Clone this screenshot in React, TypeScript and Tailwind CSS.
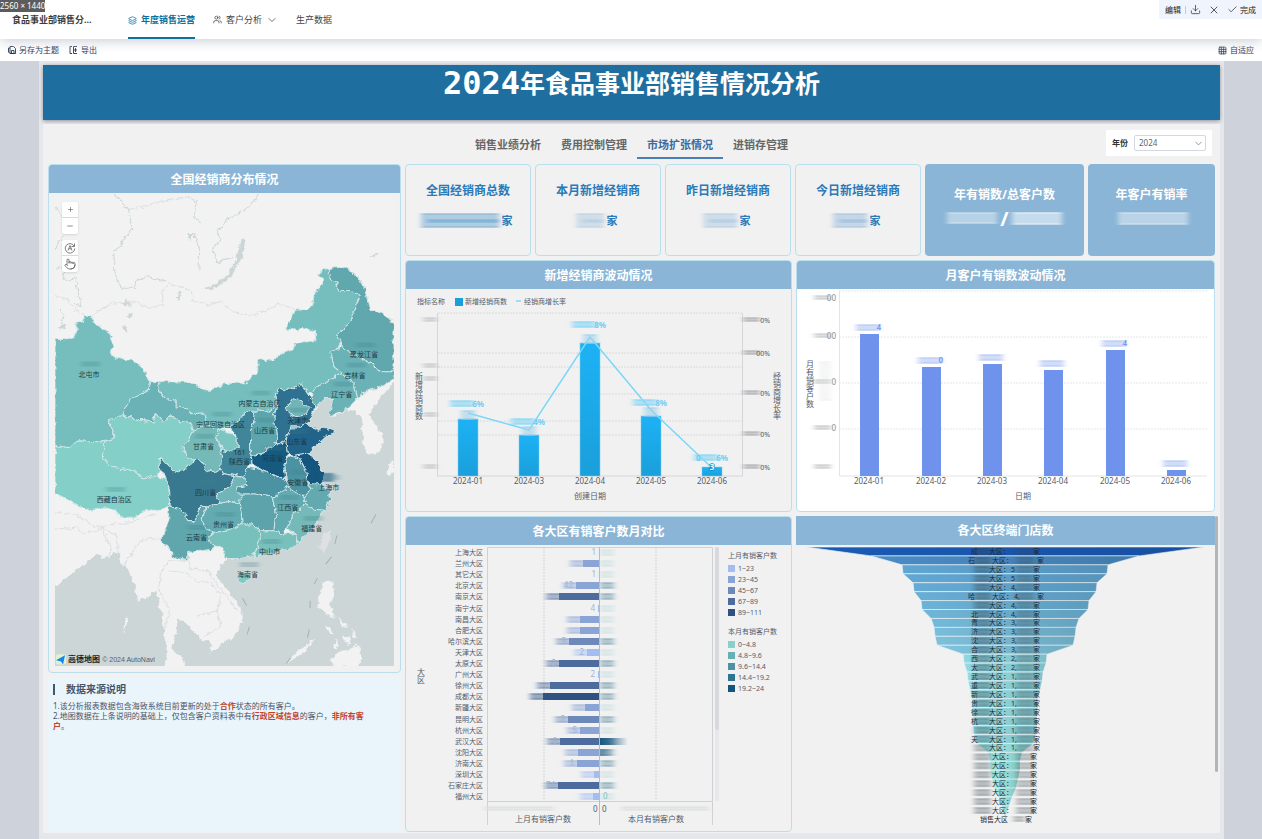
import type { ReactNode } from "react";
import {
  Check,
  ChevronDown,
  Download,
  Grid3x3,
  Layers,
  Minus,
  Plus,
  Pointer,
  Users,
  X,
} from "lucide-react";

const TABS = ["销售业绩分析", "费用控制管理", "市场扩张情况", "进销存管理"];

const KPIS = [
  { title: "全国经销商总数", width: 78, tone: "#5f9fce" },
  { title: "本月新增经销商", width: 28, tone: "#a9c8e0" },
  { title: "昨日新增经销商", width: 34, tone: "#a3c5e0" },
  { title: "今日新增经销商", width: 34, tone: "#8fb6d9" },
];

// Province outlines on the map grid, three units to the pixel.
const PROVINCES: { fill: string; points: string }[] = [
  { fill: "#76bebd", points: "45,535 75,535 95,540 108,520 108,490 130,485 135,468 150,470 160,490 190,505 210,520 218,545 213,585 240,595 275,600 310,625 320,650 332,663 325,690 300,705 270,715 255,745 250,765 205,780 222,830 215,840 175,845 115,838 90,862 45,855" },
  { fill: "#76bebd", points: "332,663 440,665 470,680 510,693 550,670 610,668 655,630 650,600 670,597 700,600 725,580 755,570 760,550 790,545 830,545 820,515 785,505 770,512 738,505 760,450 800,450 815,440 820,405 845,370 845,355 830,345 850,328 870,325 862,345 885,365 895,395 935,395 958,405 940,450 925,490 885,525 900,545 885,570 870,575 880,620 905,640 870,655 850,670 825,680 815,700 800,700 780,670 765,680 740,690 715,685 705,700 710,730 680,755 645,752 620,755 600,775 565,800 535,805 490,795 495,775 490,758 450,760 440,745 410,740 410,720 375,715 355,690 355,665" },
  { fill: "#6bb2b6", points: "332,663 355,665 355,690 375,715 410,720 410,740 440,745 450,760 490,758 495,775 490,795 460,810 440,780 420,785 390,765 370,785 345,760 340,785 300,780 250,765 255,745 270,715 300,705 325,690" },
  { fill: "#60a7ae", points: "870,325 910,322 945,345 965,370 975,400 990,450 1020,460 1059,490 1059,635 1020,635 990,610 950,590 915,570 905,555 885,525 925,490 940,450 958,405 935,395 895,395 885,365 862,345" },
  { fill: "#6bb2b6", points: "885,570 905,555 915,570 950,590 990,610 1020,635 1059,635 1059,655 1030,675 975,695 950,712 940,670 905,640 880,620 870,575" },
  { fill: "#6bb2b6", points: "905,640 940,670 950,712 920,745 865,770 875,715 850,715 820,745 805,720 815,700 825,680 850,670 870,655" },
  { fill: "#84cfc8", points: "45,855 90,862 115,838 175,845 190,845 190,890 215,920 280,930 310,955 350,945 380,960 388,1000 385,1035 355,1050 320,1045 290,1070 240,1070 220,1045 180,1040 150,1050 110,1035 70,1010 45,1000" },
  { fill: "#84cfc8", points: "205,780 250,765 300,780 340,785 345,760 370,785 390,765 420,785 440,780 460,810 430,860 445,895 465,895 430,930 405,935 370,900 357,895 360,930 350,945 310,955 280,930 215,920 190,890 190,845 215,840 222,830" },
  { fill: "#74bab8", points: "460,810 490,795 535,805 525,835 545,865 545,900 540,930 500,935 490,910 465,895 445,895 430,860" },
  { fill: "#7cc6c2", points: "535,805 560,815 590,830 590,860 570,875 545,865 525,835" },
  { fill: "#3f8599", points: "565,800 600,775 620,755 645,752 640,780 630,810 630,880 635,905 620,920 610,950 580,945 550,940 540,930 545,865 570,875 590,860 590,830" },
  { fill: "#5da5ac", points: "645,752 680,755 710,730 700,770 710,820 705,850 660,880 630,885 630,810 640,780" },
  { fill: "#2f7190", points: "705,700 715,685 740,690 765,680 780,670 800,700 810,715 825,735 810,770 800,790 780,800 750,800 735,840 720,850 705,850 710,820 700,770 710,730" },
  { fill: "#6fb5b8", points: "735,745 755,715 775,720 805,745 790,765 760,770 740,758" },
  { fill: "#22648a", points: "735,840 750,800 780,800 800,790 830,810 850,800 883,815 855,830 820,860 800,878 765,885 740,880" },
  { fill: "#175a80", points: "630,885 660,880 705,850 720,850 735,840 740,880 740,900 730,920 735,955 700,945 650,925 635,905" },
  { fill: "#14567e", points: "755,885 800,878 830,900 845,930 850,960 835,985 800,965 795,930 780,900" },
  { fill: "#4c92a2", points: "740,895 760,885 780,900 795,930 800,965 815,985 790,1010 740,980 735,940 730,920" },
  { fill: "#377990", points: "357,895 370,900 405,935 430,930 465,895 490,910 500,935 540,930 550,940 580,945 580,960 560,985 530,995 535,1025 500,1040 480,1035 465,1080 445,1080 420,1045 390,1035 388,990 375,950 357,920" },
  { fill: "#6fb5b8", points: "580,945 620,955 620,975 590,980 605,1000 600,1030 570,1020 535,1025 530,995 560,985 580,960" },
  { fill: "#4c92a2", points: "620,920 650,925 700,945 735,955 745,980 720,1000 695,1010 640,1000 595,1000 590,980 620,975 610,950" },
  { fill: "#5fa6ad", points: "385,1035 420,1045 445,1080 465,1080 480,1035 500,1040 485,1075 495,1105 520,1110 505,1130 530,1160 490,1170 445,1175 445,1200 400,1190 390,1165 360,1140 375,1110 385,1080" },
  { fill: "#64abb0", points: "500,1040 535,1025 570,1020 600,1030 605,1090 570,1110 520,1115 495,1105 485,1075" },
  { fill: "#5ca3ab", points: "605,1000 640,1000 695,1010 705,1060 700,1110 655,1110 640,1090 605,1090 600,1030" },
  { fill: "#62aab0", points: "695,1010 740,980 790,1010 795,1030 760,1060 738,1100 730,1120 700,1110 705,1060" },
  { fill: "#62aab0", points: "800,970 835,970 865,990 870,1020 850,1050 820,1045 795,1030 790,1010 815,985" },
  { fill: "#74bab8", points: "795,1030 820,1045 850,1050 815,1105 770,1145 765,1120 738,1100 760,1060" },
  { fill: "#78c0bc", points: "505,1130 520,1115 570,1110 605,1090 640,1090 655,1110 660,1130 650,1160 635,1185 600,1190 555,1190 545,1160 510,1150" },
  { fill: "#78c0bc", points: "655,1110 700,1110 730,1120 765,1120 770,1155 740,1165 700,1175 640,1190 650,1160 660,1130" },
  { fill: "#7fcbc4", points: "592,1250 610,1238 632,1240 625,1258 605,1268 592,1262" },
];

const PLACES: [string, number, number][] = [
  ["北屯市", 34, 182],
  ["西藏自治区", 59, 307],
  ["宁夏回族自治区", 165, 232],
  ["内蒙古自治区", 204, 211],
  ["黑龙江省", 308, 163],
  ["吉林省", 299, 183],
  ["辽宁省", 286, 202],
  ["天津市", 242, 228],
  ["山西省", 209, 238],
  ["山东省", 241, 249],
  ["甘肃省", 148, 254],
  ["陕西省", 184, 269],
  ["河南省", 217, 266],
  ["四川省", 150, 300],
  ["安徽省", 242, 290],
  ["上海市", 273, 295],
  ["江西省", 232, 315],
  ["贵州省", 168, 332],
  ["云南省", 141, 345],
  ["福建省", 256, 336],
  ["中山市", 214, 359],
  ["海南省", 192, 382],
];

const DEALER_BARS = [
  { month: "2024-01", x: 62, top: 130, line: 124, label: "6%", end: 78, base: 118 },
  { month: "2024-03", x: 123, top: 146, line: 141, label: "4%", end: 139, base: 136 },
  { month: "2024-04", x: 184, top: 54, line: 48, label: "8%", end: 200, base: 39 },
  { month: "2024-05", x: 245, top: 127, line: 121, label: "8%", end: 261, base: 117 },
  { month: "2024-06", x: 306, top: 178, line: 179, label: "6%", end: 322, base: 172 },
];

const MONTH_BARS = [
  { month: "2024-01", x: 72, top: 45, label: "4" },
  { month: "2024-02", x: 134, top: 78, label: "0" },
  { month: "2024-03", x: 195, top: 75, label: "" },
  { month: "2024-04", x: 256, top: 81, label: "" },
  { month: "2024-05", x: 318, top: 61, label: "4" },
  { month: "2024-06", x: 379, top: 181, label: "" },
];

const LAST_MONTH = [
  { color: "#a3bdf0", label: "1~23" },
  { color: "#8aa4d6", label: "23~45" },
  { color: "#6c89b9", label: "45~67" },
  { color: "#4d6c9d", label: "67~89" },
  { color: "#2f5282", label: "89~111" },
];

const THIS_MONTH = [
  { color: "#86d1ca", label: "0~4.8" },
  { color: "#69b0b4", label: "4.8~9.6" },
  { color: "#4c92a2", label: "9.6~14.4" },
  { color: "#2f7490", label: "14.4~19.2" },
  { color: "#12557c", label: "19.2~24" },
];

// name, bar length, colour bucket, readable part of the value
const REGIONS: [string, number, number, string][] = [
  ["上海大区", 0, 0, "1"],
  ["兰州大区", 16, 1, ""],
  ["其它大区", 0, 0, "1"],
  ["北京大区", 23, 1, "42"],
  ["南京大区", 40, 3, ""],
  ["南宁大区", 1, 0, "4"],
  ["南昌大区", 19, 1, ""],
  ["合肥大区", 19, 1, ""],
  ["哈尔滨大区", 30, 2, "5"],
  ["天津大区", 12, 0, "2"],
  ["太原大区", 40, 3, "2"],
  ["广州大区", 1, 0, "2"],
  ["徐州大区", 49, 3, ""],
  ["成都大区", 56, 4, ""],
  ["新疆大区", 14, 1, ""],
  ["昆明大区", 31, 2, "2"],
  ["杭州大区", 19, 1, "5"],
  ["武汉大区", 39, 3, "0"],
  ["沈阳大区", 21, 1, ""],
  ["济南大区", 22, 1, "1"],
  ["深圳大区", 5, 0, ""],
  ["石家庄大区", 41, 3, "74"],
  ["福州大区", 6, 0, ""],
];

const FUNNEL_EDGES = [
  199, 134, 103, 102, 92, 91, 84, 83, 74, 71, 70, 68, 42, 41, 38, 37, 35, 33,
  33, 32, 32, 31, 28, 17, 15, 15, 13, 11, 7, 4, 1, 0,
];

const FUNNEL_FILLS = [
  "#1b5ab5", "#4a8cc5", "#60a5d2", "#62a8d4", "#66abd5", "#69aed6", "#6cb2d7",
  "#70b5d8", "#74b9da", "#78bddb", "#7cc0dc", "#80c4dd", "#8dd8e2", "#8fdae3",
];

const FUNNEL_ROWS: [string, string][] = [
  ["成", ""], ["石", ""], ["", "5"], ["", "5"], ["", "4,"], ["哈", "4,"],
  ["", "4,"], ["北", "4,"], ["青", "3,"], ["济", "3,"], ["沈", "3,"],
  ["合", "3,"], ["西", "2,"], ["太", "2,"], ["武", "1,"], ["重", "1,"],
  ["新", "1,"], ["贵", "1,"], ["徐", "1,"], ["杭", "1,"], ["", "1,"],
  ["天", "1,"], ["", "1,"], ["", ""], ["", ""], ["", ""], ["", ""],
  ["", ""], ["", ""], ["", ""],
];

function Smear({
  x,
  y,
  w,
  h = 6,
  color,
  opacity = 1,
}: {
  x: number;
  y: number;
  w: number;
  h?: number;
  color: string;
  opacity?: number;
}) {
  return (
    <g filter="url(#smear)" opacity={opacity}>
      <rect x={x} y={y} width={w} height={h} fill={color} opacity={0.75} />
      <rect x={x + 1} y={y + 1} width={w - 2} height={1} fill={color} />
      <rect x={x + 2} y={y + h - 2} width={w - 3} height={1} fill={color} />
    </g>
  );
}

function Card({
  title,
  white,
  children,
}: {
  title: string;
  white?: boolean;
  children: ReactNode;
}) {
  return (
    <section
      className={`min-w-0 overflow-hidden rounded border border-[#b9dfee] ${white ? "bg-white" : "bg-[#f1f1f1]"}`}
    >
      <h2 className="h-7 bg-[#8ab5d6] text-center text-[12px] leading-[30px] font-bold text-white">
        {title}
      </h2>
      {children}
    </section>
  );
}

function ChinaMap() {
  return (
    <div className="relative px-[6px] pt-px pb-[6px]">
      <svg viewBox="0 0 338 471" className="block w-full" role="img" aria-label="全国经销商分布地图">
        <g transform="scale(.33333) translate(-45 -103)">
          <rect x="45" y="103" width="1014" height="1413" fill="#f2f2f2" />
          <g filter="url(#coast)">
            <g fill="#cdd6d7">
              <path d="M20 1300L100 1235 170 1180 190 1190 235 1175 240 1205 265 1230 285 1280 290 1320 320 1310 345 1290 360 1340 370 1400 380 1470 370 1540H20Z" />
              <path d="M1080 640L1030 675 975 695 920 745 880 770 865 770 880 745 875 715 850 715 805 775 790 830 780 900 790 960 800 1020 770 1100 700 1160 600 1190 560 1195 530 1230 530 1250 565 1290 600 1340 605 1380 585 1425 550 1445 512 1475 510 1445 480 1435 455 1405 430 1380 410 1375 405 1420 395 1465 430 1490 440 1540H1080Z" />
              <path d="M488 385L520 376 560 345 585 305 603 240 615 240 605 292 575 345 530 382 500 390Z" />
              <path d="M415 395L422 392 418 420 412 422ZM985 290L1015 278 1005 296ZM245 428L262 420 272 432 255 440ZM245 500L255 495 262 515 250 512ZM255 465L275 462 268 480ZM440 225L462 220 450 240ZM55 500L78 510 72 490Z" />
            </g>
            <g fill="#f2f2f2">
              <path d="M1059 655L1000 690 975 695 920 745 945 755 965 775 960 800 970 830 965 850 985 885 1020 872 1028 835 1010 800 985 765 1000 735 1059 665Z" />
              <path d="M1059 900L1040 915 1045 945 1059 935Z" />
              <path d="M845 1265L875 1262 880 1300 865 1330 885 1365 870 1370 850 1350 830 1340 835 1300Z" />
              <path d="M850 1395L870 1400 880 1420 865 1415ZM890 1370L915 1390 925 1400 905 1400ZM905 1420L925 1430 930 1450 910 1445ZM885 1430L895 1460 880 1465ZM935 1400L948 1430 935 1425ZM870 1495L900 1470 930 1465 950 1450 962 1480 955 1516 880 1516Z" />
              <path d="M815 1440L825 1438 780 1480 735 1510 760 1480ZM258 1370L264 1372 252 1420 250 1400Z" />
            </g>
            <path d="M850 1115L870 1110 870 1130 850 1180 836 1165 838 1140Z" fill="#dfe0e1" />
            <g stroke="#cfe4e6" strokeWidth="3" strokeLinejoin="round">
              {PROVINCES.map((p) => (
                <polygon key={p.points} points={p.points} fill={p.fill} />
              ))}
            </g>
            <g fill="none" stroke="#cdd6d7" strokeWidth="3">
              <path d="M225 105L245 130 265 150 275 210 250 235 245 260 220 270 225 350 245 385 285 385 290 360 320 350 380 365" />
              <path d="M655 105L620 145 560 180 530 215 540 240 515 270 530 305 580 290" />
              <path d="M45 140L65 170M70 225L45 270M45 325H70V358L105 355 115 400 125 440 105 430M55 450L75 465 60 490" />
              <path d="M415 115L450 112 468 130 460 170 480 190M462 225L478 270 475 330" />
            </g>
            <g fill="none" stroke="#dcdfe0" strokeWidth="3">
              <path d="M150 468L215 430 280 425 330 445 370 435 365 395 385 370 450 390 460 420 500 435 540 425 580 455 640 467 680 450 715 432 760 445" />
              <path d="M45 410L80 415 105 450 135 468" />
              <path d="M265 150L330 135 380 120 415 115" />
              <path d="M45 1055L110 1065 170 1100 240 1090 300 1075 350 1060M45 1105L110 1100 130 1120 190 1100 230 1130 235 1175" />
              <path d="M190 1090L195 1130 215 1160 205 1185M360 1140L330 1130 290 1150 250 1215" />
              <path d="M440 1200L385 1200 360 1240 355 1290 390 1350 375 1400" />
              <path d="M445 1200L450 1225 500 1230 520 1260 560 1310 590 1350M470 1365L530 1350 540 1400 490 1425M385 1230L430 1235 470 1260 510 1265 540 1300 530 1360" />
            </g>
          </g>
          <g stroke="#a7b0b2" strokeWidth="3">
            <path d="M888 1125L882 1150M872 1188L855 1210M830 1252L820 1270M808 1320V1342M606 1312L618 1334M626 1398L620 1420M806 1405L800 1430M750 1490L736 1508M1005 1062L990 1088" />
          </g>
        </g>
        {PLACES.map(([name, x, y]) => (
          <g key={name}>
            <Smear x={x - 8} y={y - 15} w={19} h={5} color="#3d7f8a" opacity={0.3} />
            <text x={x} y={y} textAnchor="middle" className="fill-[#1d3a44] text-[7px]">
              {name}
            </text>
          </g>
        ))}
        <Smear x={262} y={278} w={16} h={9} color="#14567e" opacity={0.6} />
        <text x="184" y="260" textAnchor="middle" className="fill-[#1d3a44] text-[7px]">
          161
        </text>
        <rect x="1" y="459" width="10" height="10" rx="2" fill="#dff3cf" />
        <path d="M1 465L10 460 8 469 6 466Z" fill="#1684f0" />
        <text x="13" y="467" className="fill-[#222] text-[8px] font-bold">
          高德地图
        </text>
        <text x="47" y="467" className="fill-[#555f6b] font-['Liberation_Sans'] text-[7px]">
          © 2024 AutoNavi
        </text>
      </svg>
      <div className="absolute top-[9px] left-[13px] flex flex-col text-[#555]">
        <button type="button" aria-label="放大" className="grid size-4 place-items-center rounded-t-xs border-b border-[#ddd] bg-white shadow">
          <Plus size={7} />
        </button>
        <button type="button" aria-label="缩小" className="mb-[6px] grid size-4 place-items-center rounded-b-xs bg-white shadow">
          <Minus size={8} />
        </button>
        <button type="button" aria-label="自动定位" className="grid size-4 place-items-center rounded-t-xs border-b border-[#ddd] bg-white shadow">
          <svg viewBox="0 0 24 24" width="12" height="12" fill="none" stroke="currentColor" strokeWidth="1.500">
            <path d="M20.500 8.500A9.500 9.500 0 1 0 21.500 13M21 3v6h-6M8 17l4-10 4 10M9.500 13.500h5" />
          </svg>
        </button>
        <button type="button" aria-label="拖动" className="grid size-4 place-items-center rounded-b-xs bg-white shadow">
          <Pointer size={12} strokeWidth={1.500} />
        </button>
      </div>
    </div>
  );
}

function DealerChart() {
  return (
    <svg viewBox="0 0 385 222" className="block w-full fill-[#545d6b] text-[8px]" role="img" aria-label="新增经销商波动情况">
      <defs>
        <linearGradient id="dealer" x2="0" y2="1">
          <stop stopColor="#1db2f5" />
          <stop offset="1" stopColor="#1a9fdb" />
        </linearGradient>
      </defs>
      <text x="11" y="15" className="text-[7px]">指标名称</text>
      <rect x="49" y="9" width="8" height="8" fill="#1a9fdb" />
      <text x="59" y="15" className="text-[7px]">新增经销商数</text>
      <path d="M110 12h5" stroke="#7dd7f8" strokeWidth="1.500" />
      <text x="118" y="15" className="text-[7px]">经销商增长率</text>
      <path d="M32 24H336M32 64H336M32 78H336M32 105H336M32 132H336M32 146H336" stroke="#d9dadb" strokeDasharray="2 1" />
      <path d="M31.500 24V187M336.500 24V187M31 187H337" stroke="#d5d6d8" fill="none" />
      {[31, 77, 90, 126, 178].map((y) => (
        <Smear key={y} x={17} y={y - 3} w={14} h={5} color="#b9bbbf" opacity={0.6} />
      ))}
      {[31, 64, 104, 145, 178].map((y, i) => (
        <g key={y}>
          <Smear x={337} y={y - 3} w={17} h={5} color="#a4a6ab" opacity={0.7} />
          <text x="364" y={y + 3} textAnchor="end" className="text-[7px]">{i === 1 ? "00%" : "0%"}</text>
        </g>
      ))}
      {DEALER_BARS.map((b) => (
        <g key={b.month}>
          <rect x={b.x - 10} y={b.top} width="20" height={187 - b.top} fill="url(#dealer)" stroke="#7fcdf0" strokeWidth="0.500" />
          <text x={b.x} y="195" textAnchor="middle">{b.month}</text>
        </g>
      ))}
      <polyline
        points={DEALER_BARS.map((b) => `${b.x},${b.line}`).join(" ")}
        fill="none"
        stroke="#7bd6f8"
        strokeWidth="1.500"
      />
      {DEALER_BARS.map((b) => (
        <g key={b.month}>
          <Smear x={b.end - 34} y={b.base - 7} w={24} h={7} color="#8fd8f5" opacity={0.9} />
          <text x={b.end} y={b.base} textAnchor="end" className="fill-[#74cdf0] font-bold">{b.label}</text>
          {b.top < 170 && <Smear x={b.x - 7} y={b.top - 9} w={14} h={10} color="#9fd0e8" opacity={0.8} />}
        </g>
      ))}
      <text x="290" y="172" className="fill-[#74cdf0] font-bold">0</text>
      <text x="306" y="181" textAnchor="middle" stroke="#1583b8" strokeWidth="1.500" paintOrder="stroke" className="fill-white font-bold">3</text>
      <text x="184" y="210" textAnchor="middle">创建日期</text>
      <text x="13" y="107" textAnchor="middle" className="[writing-mode:vertical-rl]">新增经销商数</text>
      <text x="371" y="107" textAnchor="middle" className="[writing-mode:vertical-rl]">经销商增长率</text>
    </svg>
  );
}

function MonthChart() {
  return (
    <svg viewBox="0 0 417 222" className="block w-full fill-[#545d6b] text-[8px]" role="img" aria-label="月客户有销数波动情况">
      <path d="M42 2H410M42 48H410M42 94H410M42 140H410" stroke="#e6e7e9" strokeDasharray="2 1" />
      <path d="M42.500 2V187H410" stroke="#e3e4e6" fill="none" />
      {[9, 47, 93, 139, 178].map((y, i) => (
        <g key={y}>
          <Smear x={17} y={y - 3} w={17} h={5} color="#b4b6ba" opacity={0.6} />
          <text x="39" y={y + 3} textAnchor="end" className="fill-[#8b9098]">
            {["00", "00", "0", "0", ""][i]}
          </text>
        </g>
      ))}
      <Smear x={22} y={72} w={12} h={40} color="#e4e5e7" opacity={0.5} />
      {MONTH_BARS.map((b) => (
        <g key={b.month}>
          <rect x={b.x - 9} y={b.top} width="19" height={187 - b.top} fill="#6f92ec" />
          <Smear x={b.x - 13} y={b.top - 10} w={24} h={7} color="#b3c4f4" opacity={0.8} />
          <text x={b.x + 12} y={b.top - 4} textAnchor="end" className="fill-[#7d9cee] font-bold">{b.label}</text>
          <text x={b.x} y="195" textAnchor="middle">{b.month}</text>
        </g>
      ))}
      <text x="226" y="210" textAnchor="middle">日期</text>
      <text x="13" y="95" textAnchor="middle" className="[writing-mode:vertical-rl]">月有销客户数</text>
    </svg>
  );
}

function Legend({
  title,
  y,
  items,
}: {
  title: string;
  y: number;
  items: { color: string; label: string }[];
}) {
  return (
    <g>
      <text x="322" y={y} className="text-[7px]">{title}</text>
      {items.map((it, i) => (
        <g key={it.label}>
          <rect x="322" y={y + 7 + i * 11} width="7" height="7" fill={it.color} />
          <text x="332" y={y + 13 + i * 11} className="text-[7px]">{it.label}</text>
        </g>
      ))}
    </g>
  );
}

function RegionChart() {
  return (
    <svg viewBox="0 0 385 285" className="block w-full fill-[#545d6b] text-[8px]" role="img" aria-label="各大区有销客户数月对比">
      <defs>
        <linearGradient id="fade">
          <stop stopColor="#12557c" />
          <stop offset="0.300" stopColor="#12557c" stopOpacity="0.800" />
          <stop offset="1" stopColor="#12557c" stopOpacity="0" />
        </linearGradient>
      </defs>
      <path d="M138 2V254M250 2V254" stroke="#d4d5d7" strokeDasharray="2 1" />
      <path d="M81.500 279V1.500H306.500V279M81 255.500H307" stroke="#d0d1d3" fill="none" />
      {REGIONS.map(([name, len, bucket, value], i) => {
        const y = 6 + Math.round(i * 11.1);
        const color = LAST_MONTH[bucket].color;
        return (
          <g key={name}>
            <text x="77" y={y + 3} textAnchor="end" className="text-[7px]">{name}</text>
            {len > 1 && <Smear x={193 - len - 13} y={y - 3} w={17} h={7} color={color} opacity={0.6} />}
            <Smear x={194} y={y - 3} w={14} h={7} color={len > 20 ? "#93b1bd" : "#cfe2e2"} opacity={len > 20 ? 0.9 : 0.7} />
            {len > 0 && <rect x={193 - len} y={y - 3} width={len} height="7" fill={color} />}
            <text x={190 - len} y={y + 3} textAnchor="end" className="fill-[#9fb3dc]">{value}</text>
          </g>
        );
      })}
      <rect x="193" y="192" width="29" height="7" fill="url(#fade)" />
      <rect x="193" y="203" width="14" height="7" fill="url(#fade)" opacity="0.600" />
      <text x="197" y="253" className="fill-[#7cc6bf]">0</text>
      <path d="M193.500 1V279" stroke="#b9bcc0" />
      <Smear x={78} y={260} w={70} h={5} color="#dcddde" opacity={0.7} />
      <Smear x={215} y={260} w={88} h={5} color="#dcddde" opacity={0.7} />
      <text x="187" y="266">0</text>
      <text x="196" y="266">0</text>
      <text x="137" y="276" textAnchor="middle">上月有销客户数</text>
      <text x="250" y="276" textAnchor="middle">本月有销客户数</text>
      <text x="15" y="130" textAnchor="middle" className="[writing-mode:vertical-rl]">大区</text>
      <rect x="309" y="1" width="4" height="254" fill="#e8e8ea" />
      <rect x="309" y="1" width="4" height="183" rx="2" fill="#d8d9dc" />
      <Legend title="上月有销客户数" y={12} items={LAST_MONTH} />
      <Legend title="本月有销客户数" y={88} items={THIS_MONTH} />
    </svg>
  );
}

function FunnelChart() {
  const step = 8.93;
  return (
    <svg viewBox="0 0 419 287" className="block w-full fill-[#1f2a33] text-[7px]" role="img" aria-label="各大区终端门店数">
      <defs>
        <linearGradient id="shade">
          <stop stopOpacity="0" />
          <stop offset="1" stopOpacity="0.120" />
        </linearGradient>
      </defs>
      {FUNNEL_EDGES.slice(0, -1).map((half, i) => {
        const next = FUNNEL_EDGES[i + 1];
        const top = 2 + i * step;
        const points = `${209 - half},${top} ${209 + half},${top} ${209 + next},${top + step} ${209 - next},${top + step}`;
        return (
          <g key={i} stroke="#e8f4f8" strokeWidth="0.700">
            <polygon points={points} fill={FUNNEL_FILLS[i] ?? (i < 22 ? "#93dde4" : "#9de8e3")} />
            <polygon points={points} fill="url(#shade)" stroke="none" />
          </g>
        );
      })}
      {FUNNEL_ROWS.map(([first, digit], i) => {
        const y = 9 + i * step;
        const shift = i === 1 || i === 5 || i > 22 ? 3 : 0;
        return (
          <g key={i}>
            <text x={175 - shift} y={y}>{first}</text>
            <Smear x={178} y={y - 6} w={17} h={7} color="#34454f" opacity={i > 20 ? 0.4 : 0.45} />
            <Smear x={220} y={y - 6} w={18} h={7} color="#34454f" opacity={0.35} />
            <text x={193 + shift} y={y}>大区：</text>
            <text x={215 + shift} y={y}>{digit}</text>
            <text x={i === 1 || i === 5 ? 241 : i > 22 ? 234 : 237} y={y}>家</text>
          </g>
        );
      })}
      <text x="184" y="277">销售大区</text>
      <Smear x={217} y={271} w={12} color="#5a6268" opacity={0.4} />
      <text x="229" y="277">家</text>
    </svg>
  );
}

export default function App() {
  return (
    <div className="flex min-h-screen flex-col bg-[#ced2db] font-['Noto_Sans','Noto_Sans_CJK_SC',sans-serif] text-[#3d4757]">
      <svg className="absolute size-0" aria-hidden="true">
        <defs>
          <filter id="smear" x="-50%" y="-100%" width="200%" height="300%">
            <feGaussianBlur stdDeviation="2.5 0.4" />
          </filter>
          <filter id="coast" x="0" y="0" width="100%" height="100%">
            <feTurbulence type="fractalNoise" baseFrequency="0.06" numOctaves="3" seed="4" />
            <feDisplacementMap in="SourceGraphic" scale="18" xChannelSelector="R" yChannelSelector="G" />
          </filter>
        </defs>
      </svg>

      <header className="relative z-10 flex h-[39px] bg-white pl-3 shadow-[0_2px_12px_#c9cdd6]">
        <span className="absolute top-0 left-0 h-3 bg-[#5c5c5c] text-[8px] leading-3 text-white">
          2560 × 1440
        </span>
        <h1 className="w-[116px] text-[9px] leading-[39px] font-bold text-[#3c3c3c]">食品事业部销售分...</h1>
        <nav className="flex flex-1 items-stretch gap-[18px] text-[9px] text-[#444]">
          <a href="#ops" className="flex items-center gap-1 border-b-2 border-[#10709c] pt-[3px] font-bold text-[#10709c]">
            <Layers size={9} />
            年度销售运营
          </a>
          <a href="#customers" className="flex items-center gap-1">
            <Users size={9} />
            客户分析
            <ChevronDown size={12} strokeWidth={1.500} />
          </a>
          <a href="#production" className="flex items-center">
            生产数据
          </a>
        </nav>
        <div className="flex h-[19px] items-center gap-2 bg-[#f0f5fd] px-[6px] text-[8px] text-[#222]">
          <button type="button">编辑</button>
          <span className="-mx-1 h-2 w-px bg-[#c5cad3]" />
          <button type="button" aria-label="下载">
            <Download size={11} strokeWidth={1.500} />
          </button>
          <button type="button" aria-label="关闭">
            <X size={12} strokeWidth={1.500} className="-mx-px" />
          </button>
          <button type="button" className="flex items-center gap-[2px]">
            <Check size={11} strokeWidth={1.500} />
            完成
          </button>
        </div>
      </header>

      <div className="flex h-[22px] items-center gap-[10px] bg-white px-2 text-[8px] text-[#1e2f50]">
        <button type="button" className="flex items-center gap-[3px]">
          <svg viewBox="0 0 16 16" width="8" height="8" fill="none" stroke="currentColor" strokeWidth="1.800">
            <path d="M4 1h7l4 4v10H4zM7 9h5v6H7zM4 4H1v8l3 3" />
          </svg>
          另存为主题
        </button>
        <button type="button" className="flex items-center gap-[3px]">
          <svg viewBox="0 0 16 16" width="9" height="8" fill="none" stroke="currentColor" strokeWidth="1.800">
            <path d="M5 1H1v14h4M8 1v14M8 1h7M8 8h7M8 15h7M12 4v8" />
          </svg>
          导出
        </button>
        <button type="button" className="ml-auto flex items-center gap-[3px]">
          <Grid3x3 size={9} />
          自适应
        </button>
      </div>

      <main className="mr-[38px] ml-[39px] flex-1 bg-[#e6e7ea] px-1 py-1">
        <div className="flex h-[55px] items-start justify-center bg-[#1e6fa0] text-white shadow-[0_1px_4px_#8b8f98]">
          <p className="flex items-center leading-[36px] font-bold">
            <span className="font-['DejaVu_Sans_Mono',monospace] text-[32px]">2024</span>
            <span className="text-[25px]">年食品事业部销售情况分析</span>
          </p>
        </div>

        <div className="mt-1 bg-[#f1f1f1] pr-[5px] pb-px pl-[5px]">
          <div className="relative flex h-9 justify-center">
            <div role="tablist" className="flex text-[11px] font-bold text-[#666]">
              {TABS.map((tab, i) => (
                <button
                  key={tab}
                  type="button"
                  role="tab"
                  aria-selected={i === 2}
                  className={
                    i === 2
                      ? "mb-px border-b-2 border-[#4a7fb5] px-[10px] pt-[10px] text-[#3a6aa0]"
                      : "px-[10px] pt-[7px]"
                  }
                >
                  {tab}
                </button>
              ))}
            </div>
            <div className="absolute top-[6px] right-[3px] flex h-[26px] w-[106px] items-center gap-[6px] bg-white px-[6px] text-[8px]">
              <label htmlFor="year" className="font-bold whitespace-nowrap text-[#333]">年份</label>
              <div className="relative flex-1">
                <select
                  id="year"
                  defaultValue="2024"
                  className="block h-4 w-full appearance-none rounded-xs border border-[#d3d8e2] bg-white pl-1 text-[8px] text-[#5a6474]"
                >
                  <option>2024</option>
                  <option>2023</option>
                </select>
                <ChevronDown size={11} strokeWidth={1.500} className="pointer-events-none absolute top-[3px] right-[2px] text-[#56698c]" />
              </div>
            </div>
          </div>

          <div className="mt-1 grid grid-cols-[353fr_810fr] gap-1">
            <div className="flex min-w-0 flex-col gap-1">
              <Card title="全国经销商分布情况">
                <ChinaMap />
              </Card>
              <section className="flex-1 bg-[#eaf4fb] px-[5px] pt-1">
                <h3 className="flex items-center gap-[11px] text-[10px] leading-4 font-bold text-[#44566c]">
                  <span className="h-[11px] w-[2px] bg-[#44566c]" />
                  数据来源说明
                </h3>
                <p className="mt-1 text-[8px] leading-[10px] text-[#4a5568]">
                  1.该分析报表数据包含海致系统目前更新的处于
                  <b className="text-[#c0452f]">合作</b>状态的所有客户。
                  <br />
                  2.地图数据在上条说明的基础上，仅包含客户资料表中有
                  <b className="text-[#c0452f]">行政区域信息</b>的客户，
                  <b className="text-[#c0452f]">
                    非所有客
                    <br />户
                  </b>
                  。
                </p>
              </section>
            </div>

            <div className="flex min-w-0 flex-col gap-1">
              <div className="grid h-[92px] grid-cols-[126fr_126fr_126fr_126fr_159fr_127fr] gap-1 text-center text-[12px] font-bold">
                {KPIS.map((kpi) => (
                  <div key={kpi.title} className="rounded border border-[#b9dfee] pt-[18px] text-[#2a7ab8]">
                    <p className="leading-4">{kpi.title}</p>
                    <p className="mt-[13px] flex items-center justify-center text-[11px] leading-4">
                      <svg width={kpi.width} height="18" className="overflow-visible" aria-hidden="true">
                        <Smear x={-3} y={1} w={kpi.width} h={15} color={kpi.tone} opacity={0.6} />
                        <Smear x={3} y={7} w={kpi.width - 6} h={4} color={kpi.tone} opacity={0.5} />
                      </svg>
                      家
                    </p>
                  </div>
                ))}
                <div className="rounded bg-[#8ab5d6] pt-[23px] text-white">
                  <p className="leading-4">年有销数/总客户数</p>
                  <p className="mt-[6px] flex items-center justify-center gap-px text-[20px] leading-5">
                    <svg width="52" height="18" className="overflow-visible" aria-hidden="true">
                      <Smear x={0} y={2} w={50} h={12} color="#d5e5f1" opacity={0.8} />
                    </svg>
                    /
                    <svg width="52" height="18" className="overflow-visible" aria-hidden="true">
                      <Smear x={2} y={2} w={50} h={13} color="#e3eef6" opacity={0.9} />
                    </svg>
                  </p>
                </div>
                <div className="rounded bg-[#8ab5d6] pt-[23px] text-white">
                  <p className="leading-4">年客户有销率</p>
                  <p className="mt-[6px] flex h-5 items-center justify-center">
                    <svg width="74" height="18" className="overflow-visible" aria-hidden="true">
                      <Smear x={3} y={2} w={70} h={13} color="#d9e7f2" opacity={0.8} />
                    </svg>
                  </p>
                </div>
              </div>

              <div className="grid grid-cols-[387fr_419fr] gap-1">
                <Card title="新增经销商波动情况">
                  <DealerChart />
                </Card>
                <Card title="月客户有销数波动情况" white>
                  <MonthChart />
                </Card>
              </div>

              <div className="grid grid-cols-[387fr_419fr] gap-1">
                <Card title="各大区有销客户数月对比">
                  <div className="pt-px">
                    <RegionChart />
                  </div>
                </Card>
                <section className="relative min-w-0">
                  <h2 className="h-[29px] bg-[#8ab5d6] text-center text-[12px] leading-[30px] font-bold text-white">
                    各大区终端门店数
                  </h2>
                  <FunnelChart />
                  <span className="absolute top-0 -right-[3px] h-[256px] w-[3px] rounded-full bg-[#b3b4b8]" />
                </section>
              </div>
            </div>
          </div>
        </div>
      </main>
    </div>
  );
}
